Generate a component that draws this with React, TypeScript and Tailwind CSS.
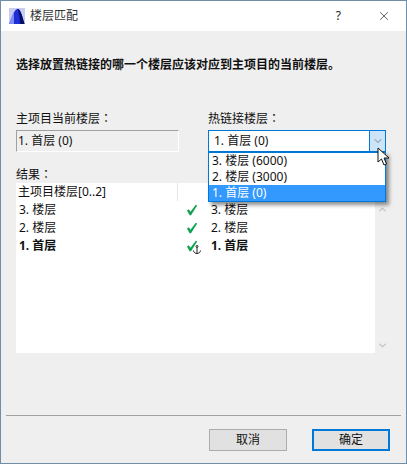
import { ChevronDown, ChevronUp, X } from "lucide-react";

const FONT = "font-['Noto_Sans','Noto_Sans_CJK_SC',sans-serif]";

const rows = [
  { left: "3. 楼层", right: "3. 楼层", bold: false },
  { left: "2. 楼层", right: "2. 楼层", bold: false },
  { left: "1. 首层", right: "1. 首层", bold: true, anchor: true },
];

function AppIcon() {
  return (
    <svg width="16" height="16" viewBox="0 0 16 16" className="shrink-0">
      <rect width="16" height="16" fill="#c8ccf4" />
      <path d="M0 16 C3 10 5 1 8.5 1 C12 1 13.5 9 15.5 16 Z" fill="#1c2fd8" />
      <path d="M8.5 1 C11.5 1 13.5 9 15.5 16 L11 16 C10.8 9 10 4 8.5 1 Z" fill="#0a0f60" />
      <path d="M0 16 C2 11 3 7 5 4 L5 16 Z" fill="#7f8cf0" />
    </svg>
  );
}

function CheckMark() {
  return (
    <svg width="12" height="12" viewBox="0 0 12 12">
      <path d="M1 6.5 L2.8 5.2 L4.5 7.8 L9.8 0.8 L11.2 1.6 L5 11.2 L3.6 11.2 Z" fill="#0fa34f" />
    </svg>
  );
}

function SmallAnchor() {
  return (
    <svg width="8" height="9" viewBox="0 0 8 9" className="absolute left-[7px] top-[5px]" fill="none" stroke="#222" strokeWidth="1">
      <circle cx="4" cy="1.5" r="1" />
      <path d="M4 2.5 V8.5 M0.5 5.5 C0.8 7.5 2.2 8.5 4 8.5 C5.8 8.5 7.2 7.5 7.5 5.5" />
    </svg>
  );
}

function Cursor() {
  return (
    <svg width="14" height="20" viewBox="0 0 14 20" className="absolute left-[376px] top-[146px]">
      <path d="M1 1 L1 15 L4.5 12 L7 18 L9.5 17 L7 11 L12 11 Z" fill="#fff" stroke="#111" strokeWidth="1" />
    </svg>
  );
}

export default function App() {
  return (
    <div className={`${FONT} relative flex h-[464px] w-[407px] flex-col border border-[#6f8fa8] bg-[#efefef] text-[12px] leading-[18px] text-[#111]`}>
      {/* title bar */}
      <div className="flex h-[30px] shrink-0 items-center bg-white pl-[8px]">
        <AppIcon />
        <span className="ml-[5px] text-[12px] text-[#333]">楼层匹配</span>
        <span className="ml-auto mr-[36px] text-[12px] text-[#222]">?</span>
        <X size={14} strokeWidth={1.2} className="mr-[15px] text-[#222]" />
      </div>

      <div className="flex flex-1 flex-col px-[15px]">
        <p className="mt-[25px] font-bold">选择放置热链接的哪一个楼层应该对应到主项目的当前楼层。</p>

        <div className="mt-[35px] flex">
          <div className="w-[192px]">
            <div className="h-[18px]">
              主项目当前楼层<span className="font-['Noto_Sans_CJK_TC']">：</span>
            </div>
            <div className="mt-[3px] flex h-[22px] w-[163px] items-center border border-[#a0a0a0] border-r-white border-b-white pl-[1px]">
              1. 首层 (0)
            </div>
          </div>
          <div>
            <div className="h-[18px]">
              热链接楼层<span className="font-['Noto_Sans_CJK_TC']">：</span>
            </div>
            <div className="mt-[3px] flex h-[22px] w-[178px] items-center border border-[#0078d7] bg-white pl-[5px]">
              <span className="flex-1">1. 首层 (0)</span>
              <span className="flex h-full w-[16px] items-center justify-center border-l border-[#0078d7] bg-[#cce4f7]">
                <ChevronDown size={12} strokeWidth={1.2} className="text-[#444]" />
              </span>
            </div>
          </div>
        </div>

        <div className="mt-[13px] h-[18px]">
          结果<span className="font-['Noto_Sans_CJK_TC']">：</span>
        </div>
        <div className="flex">
          <div className="h-[170px] w-[359px] bg-white">
            <div className="flex h-[18px]">
              <div className="w-[162px] border-r border-[#e5e5e5] pl-[2px]">主项目楼层[0..2]</div>
            </div>
            <div>
              {rows.map((row) => (
                <div key={row.left} className={`flex h-[18px] items-center ${row.bold ? "font-bold" : ""}`}>
                  <span className="w-[171px] pl-[3px]">{row.left}</span>
                  <span className="relative -ml-[1px] w-[25px]">
                    <CheckMark />
                    {row.anchor && <SmallAnchor />}
                  </span>
                  <span>{row.right}</span>
                </div>
              ))}
            </div>
          </div>
          <div className="flex h-[170px] w-[15px] flex-col items-center justify-between pt-[21px] pb-[2px] text-[#c4c4c4]">
            <ChevronUp size={11} strokeWidth={3} />
            <ChevronDown size={11} strokeWidth={3} />
          </div>
        </div>

        <div className="-mx-[10px] mt-auto h-[1px] bg-[#a0a0a0]" />
        <div className="mt-[13px] mb-[12px] flex justify-end gap-[25px] pr-[1px]">
          <button className="flex h-[22px] w-[78px] items-center justify-center border border-[#adadad] bg-[#e1e1e1]">取消</button>
          <button className="flex h-[22px] w-[78px] items-center justify-center border-2 border-[#0078d7] bg-[#e1e1e1]">确定</button>
        </div>
      </div>

      {/* open dropdown */}
      <div className="absolute left-[207px] top-[151px] w-[178px] border border-[#0078d7] bg-white shadow-[3px_3px_4px_rgba(0,0,0,0.45)]">
        <div className="h-[16px] pl-[3px] leading-[16px]">3. 楼层 (6000)</div>
        <div className="h-[16px] pl-[3px] leading-[16px]">2. 楼层 (3000)</div>
        <div className="h-[16px] bg-[#3399ff] pl-[3px] leading-[16px] text-white">1. 首层 (0)</div>
      </div>
      <Cursor />
    </div>
  );
}
